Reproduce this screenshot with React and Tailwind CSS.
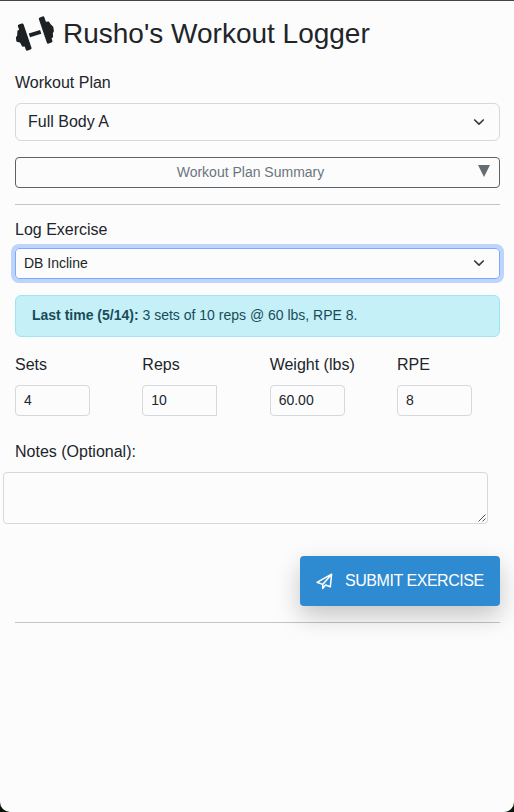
import React from "react";

function Dumbbell() {
  return (
    <svg width="39" height="36" viewBox="15 16 39 36" fill="#1d2124" stroke="#1d2124" strokeLinejoin="round" className="mt-[15px] shrink-0">
      <path d="M19.4 26L22.2 25L30 48L27.2 49.2ZM40.4 18.9L43 17.9L50.9 41L48.2 42.1Z" strokeWidth="3" />
      <path d="M18.3 31L22 30L27 45L22.8 45.8L20.8 42L17.2 41L16.8 37.5L18 36ZM44.5 22.8L48.3 22.3L50 25L52.4 27.2L53 31L51.9 33L52.2 36.8L50 38Z" strokeWidth="1.8" />
      <path d="M29.4 35.4L40.7 31.8" strokeWidth="4" />
    </svg>
  );
}

function Chevron() {
  return (
    <svg width="12" height="12" viewBox="0 0 16 16" fill="none" stroke="#343a40" strokeWidth="2.2" strokeLinecap="round" strokeLinejoin="round" className="-mt-px">
      <path d="m2.3 5.3 5.7 5.6 5.7-5.6" />
    </svg>
  );
}

function Field({ label, value, square }) {
  return (
    <div className="w-[127.33px] shrink-0">
      <div className="h-6 whitespace-nowrap leading-[23px]">{label}</div>
      <div className={`mt-2 h-[31px] w-[75px] border border-[#d5d8dc] pl-2 text-[14px] leading-[29px] ${square ? "rounded-l" : "rounded"}`}>{value}</div>
    </div>
  );
}

export default function App() {
  return (
    <div className="h-[812px] w-[514px] overflow-hidden bg-[#081408] font-['Liberation_Sans',Arial,sans-serif] text-base text-[#212529]">
      <div className="h-full rounded-b-[10px] border-t border-[#454347] bg-[#fcfcfd] pl-[15px] pr-[14px]">
        <header className="flex h-[70px]">
          <Dumbbell />
          <h1 className="ml-[9px] mt-4 whitespace-nowrap text-[28px] leading-[34px]">Rusho's Workout Logger</h1>
        </header>

        <div className="h-6 leading-[23px]">Workout Plan</div>
        <div className="mt-2 flex h-[38px] items-center justify-between rounded-md border border-[#d5d8de] pl-3 pr-[14px]">
          <span className="leading-6">Full Body A</span>
          <Chevron />
        </div>
        <div className="mt-4 flex h-[31px] items-center rounded border border-[#5c6368] pr-[9px] text-[14px] text-[#6c757d]">
          <span className="flex-1 pl-[7px] text-center">Workout Plan Summary</span>
          <svg width="12" height="12" viewBox="0 0 12 12" className="-mt-[3px]"><path d="M0 0H12L6 12Z" fill="#646c72" /></svg>
        </div>
        <hr className="mt-4 border-[#c2c3c5]" />

        <div className="mt-3 h-6 leading-[25px]">Log Exercise</div>
        <div className="mt-[7px] flex h-[31px] items-center justify-between rounded border border-[#78adfb] pl-2 pr-[14px] text-[14px] ring-4 ring-[#bfd4fb]">
          <span>DB Incline</span>
          <Chevron />
        </div>
        <div className="mt-4 h-[42px] rounded-md border border-[#9be6f1] bg-[#c5f0f7] pl-4 text-[14px] leading-[39px] text-[#174c59]">
          <strong>Last time (5/14):</strong> 3 sets of 10 reps @ 60 lbs, RPE 8.
        </div>

        <div className="mt-4 flex">
          <Field label="Sets" value="4" />
          <Field label="Reps" value="10" square />
          <Field label="Weight (lbs)" value="60.00" />
          <Field label="RPE" value="8" />
        </div>

        <div className="mt-6 h-6 leading-[23px]">Notes (Optional):</div>
        <div className="-ml-3 mt-2 flex h-[52px] w-[485px] items-end justify-end rounded border border-[#d5d8dc] p-px">
          <svg width="8" height="8" viewBox="0 0 8 8" stroke="#555" strokeWidth="1"><path d="M0.5 7.5L7.5 0.5M4.5 7.5L7.5 4.5" /></svg>
        </div>

        <div className="mt-8 flex justify-end">
          <button className="flex h-[50px] w-[200px] items-center rounded bg-[#2e8bd2] pl-4 text-[16px] text-white shadow-[0_10px_24px_rgba(0,0,0,0.22)]">
            <svg width="17" height="17" viewBox="0 0 17 17" fill="none" stroke="white" strokeWidth="1.5" strokeLinejoin="round" strokeLinecap="round" className="mt-px">
              <path d="M1 9.3L15.6 1.2L14.3 13.8L9.5 12L6.7 15.4V11.4L1 9.3ZM6.7 11.4L15.6 1.2" />
            </svg>
            <span className="ml-3 whitespace-nowrap tracking-[-0.45px]">SUBMIT EXERCISE</span>
          </button>
        </div>
        <hr className="mt-4 border-[#c2c3c5]" />
      </div>
    </div>
  );
}
